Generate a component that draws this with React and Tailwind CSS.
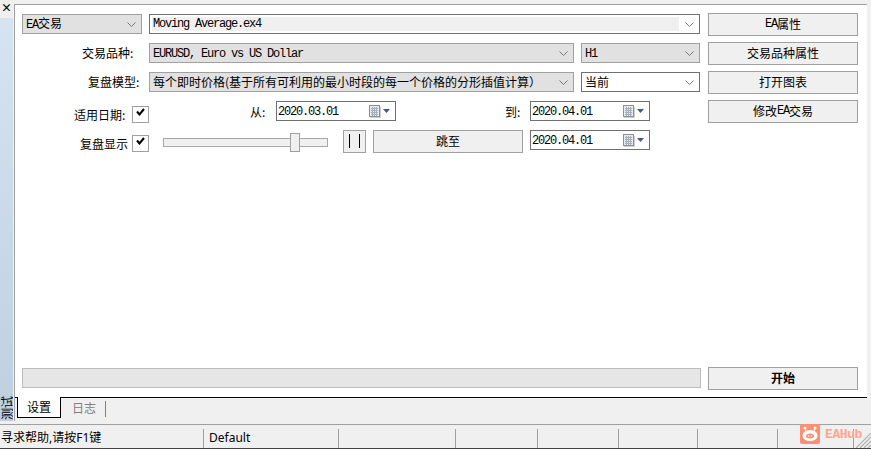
const cjk = '"Noto Sans CJK SC", sans-serif';
const latin = "font-['Liberation_Mono'] text-[12px] tracking-[-1.2px]";

function Chevron() {
  return (
    <svg width="9" height="5" viewBox="0 0 9 5" className="shrink-0">
      <path d="M0.5 0.5 L4.5 4.5 L8.5 0.5" fill="none" stroke="#777" strokeWidth="1" />
    </svg>
  );
}

function L({ children }) {
  return <span className={latin}>{children}</span>;
}

function Select({ className, children }) {
  return (
    <div className={`flex items-center h-[20px] mt-px pl-[3px] pr-[5px] text-[12px] leading-none ${className}`}>
      <div className="flex-1 min-w-0 whitespace-nowrap">{children}</div>
      <Chevron />
    </div>
  );
}

function Btn({ className = "", children }) {
  return (
    <div className={`flex items-center justify-center h-[23px] pb-px border border-[#a0a0a0] bg-[#f0f0f0] text-[12px] leading-none text-black ${className}`}>
      {children}
    </div>
  );
}

function Check() {
  return (
    <div className="w-[17px] h-[17px] mt-[6px] border border-[#a0a0a0] bg-white flex items-start justify-start shrink-0">
      <svg width="9" height="8" viewBox="0 0 9 8" className="mt-[1px] ml-[3px]">
        <path d="M1 3.5 L3.5 6.5 L8 1" fill="none" stroke="#000" strokeWidth="2" />
      </svg>
    </div>
  );
}

function DateBox({ value, className = "" }) {
  return (
    <div className={`flex items-center h-[20px] mt-px border border-[#707070] bg-white pl-[1px] pr-[5px] ${className}`}>
      <span className={`flex-1 pt-[2px] ${latin} leading-none text-black`}>{value}</span>
      <svg width="21" height="13" viewBox="0 0 21 13" className="shrink-0">
        <rect x="0.5" y="0.5" width="10" height="11" fill="#e8eaee" stroke="#8a8f98" />
        <path d="M2 3.5H9M2 5.5H9M2 7.5H9M2 9.5H9M3.5 2V11M5.5 2V11M7.5 2V11" stroke="#a9afb9" strokeWidth="1" />
        <path d="M1 12.5H12M11.5 2V12" stroke="#cfcfcf" />
        <path d="M14 4H21L17.5 8Z" fill="#3f5b86" />
      </svg>
    </div>
  );
}

export default function App() {
  return (
    <div className="w-[871px] h-[449px] flex flex-col bg-[#f0f0f0] text-black overflow-hidden" style={{ fontFamily: cjk }}>
      <div className="flex-1 min-h-0 flex">
        <div className="w-[13px] flex flex-col shrink-0 pb-[3px]">
          <div className="h-[18px] flex items-center justify-center text-[11px] font-bold leading-none pb-[4px]">×</div>
          <div className="flex-1 bg-gradient-to-b from-[#d6e4f1] to-[#bfcfdf] flex flex-col justify-end items-center overflow-hidden">
            <span className="text-[12px] leading-[13px] [writing-mode:vertical-rl] [text-orientation:sideways] rotate-180 mb-[1px]">测试</span>
          </div>
        </div>
        <div className="w-px bg-[#a0a0a0] mt-[4px] mb-[3px] shrink-0 ml-px" />
        <div className="w-[852px] shrink-0 mt-[4px] flex flex-col">
          <div className="h-[393px] flex flex-col border-t border-[#a0a0a0] bg-white pt-[8px] pl-[7px] pb-[7px]">
            <div className="flex items-start h-[23px] mb-[6px]">
              <Select className="w-[120px] border border-[#a0a0a0] bg-[#e1e1e1]">
                <L>EA</L>交易
              </Select>
              <div className="ml-[7px] mt-px w-[551px] h-[20px] border border-[#707070] bg-white flex items-center pr-[5px] p-[2px]">
                <div className={`flex-1 h-full bg-[#f0f0f0] ${latin} leading-[14px] pl-[1px] mr-[6px]`}>Moving Average.ex4</div>
                <Chevron />
              </div>
              <Btn className="ml-[8px] w-[150px]"><L>EA</L>属性</Btn>
            </div>
            <div className="flex items-start h-[23px] mb-[6px]">
              <div className="ml-[60px] w-[67px] text-[12px] leading-none mt-[5px] whitespace-nowrap">交易品种:</div>
              <Select className="w-[425px] border border-[#a0a0a0] bg-[#e1e1e1]">
                <L>EURUSD, Euro vs US Dollar</L>
              </Select>
              <Select className="ml-[7px] w-[119px] border border-[#a0a0a0] bg-[#e1e1e1]">
                <L>H1</L>
              </Select>
              <Btn className="ml-[8px] w-[150px]">交易品种属性</Btn>
            </div>
            <div className="flex items-start h-[23px] mb-[6px]">
              <div className="ml-[66px] w-[61px] text-[12px] leading-none mt-[5px] whitespace-nowrap">复盘模型:</div>
              <Select className="w-[425px] border border-[#a0a0a0] bg-[#e1e1e1]">
                每个即时价格(基于所有可利用的最小时段的每一个价格的分形插值计算）
              </Select>
              <Select className="ml-[7px] w-[119px] border border-[#707070] bg-white">当前</Select>
              <Btn className="ml-[8px] w-[150px]">打开图表</Btn>
            </div>
            <div className="flex items-start h-[23px] mb-[6px]">
              <div className="ml-[52px] w-[58px] text-[12px] leading-none mt-[9px] whitespace-nowrap">适用日期:</div>
              <Check />
              <div className="ml-[101px] w-[26px] text-[12px] leading-none mt-[6px]">从:</div>
              <DateBox value="2020.03.01" className="w-[120px]" />
              <div className="ml-[109px] w-[25px] text-[12px] leading-none mt-[6px]">到:</div>
              <DateBox value="2020.04.01" className="w-[120px]" />
              <Btn className="ml-[58px] w-[150px]">修改<L>EA</L>交易</Btn>
            </div>
            <div className="flex items-start h-[24px]">
              <div className="ml-[58px] w-[52px] text-[12px] leading-none mt-[9px] whitespace-nowrap">复盘显示</div>
              <Check />
              <div className="ml-[14px] mt-[4px] relative w-[165px] h-[19px] flex items-center">
                <div className="w-full h-[9px] border border-[#a8a8a8] bg-[#f0f0f0]" />
                <div className="absolute left-[127px] top-0 w-[10px] h-[19px] border border-[#a0a0a0] bg-[#f0f0f0]" />
              </div>
              <Btn className="ml-[15px] mt-px w-[23px]">
                <div className="flex gap-[9px] h-[14px]">
                  <div className="w-px h-full bg-black" />
                  <div className="w-px h-full bg-black" />
                </div>
              </Btn>
              <Btn className="ml-[7px] mt-px w-[150px]">跳至</Btn>
              <DateBox value="2020.04.01" className="ml-[7px] w-[120px]" />
            </div>
            <div className="mt-auto flex items-start h-[23px]">
              <div className="w-[679px] h-[20px] mt-px border border-[#bcbcbc] bg-[#e6e6e6]" />
              <Btn className="ml-[7px] w-[150px] font-bold">开始</Btn>
            </div>
          </div>
          <div className="flex-1 min-h-0 border-t border-black flex items-start pl-[2px]">
            <div className="w-[44px] h-[21px] -mt-px bg-white border-l border-r border-b border-black flex items-center justify-center text-[12px] leading-none">
              设置
            </div>
            <div className="ml-[11px] w-[24px] whitespace-nowrap text-[12px] text-[#808080] leading-none mt-[4px]">日志</div>
            <div className="ml-[9px] mt-[3px] w-px h-[16px] bg-[#808080]" />
          </div>
        </div>
      </div>
      <div className="h-[25px] border-t border-[#a0a0a0] border-b border-b-[#444] flex items-end relative text-[12px] leading-none" style={{ fontFamily: '"Noto Sans", "Noto Sans CJK SC", sans-serif' }}>
        <div className="w-[204px] h-[19px] pb-[2px] flex items-center pl-[1px] border-r border-[#a0a0a0] whitespace-nowrap">寻求帮助,请按F1键</div>
        <div className="w-[135px] h-[19px] pb-[2px] flex items-center pl-[5px] border-r border-[#a0a0a0]">Default</div>
        <div className="w-[117px] h-[19px] border-r border-[#a0a0a0]" />
        <div className="w-[82px] h-[19px] border-r border-[#a0a0a0]" />
        <div className="w-[81px] h-[19px] border-r border-[#a0a0a0]" />
        <div className="w-[79px] h-[19px] border-r border-[#a0a0a0]" />
        <div className="w-[80px] h-[19px] border-r border-[#a0a0a0]" />
        <div className="w-[76px] h-[19px] border-r border-[#a0a0a0]" />
        <div className="absolute left-[800px] -top-px flex items-center gap-[5px]">
          <svg width="20" height="20" viewBox="0 0 20 20">
            <rect width="20" height="20" rx="2" fill="#ff8f73" />
            <path d="M6 7L5 4M14 7L15 4" stroke="#fff" strokeWidth="1" />
            <circle cx="5" cy="4" r="1.5" fill="#fff" />
            <circle cx="15" cy="4" r="1.5" fill="#fff" />
            <ellipse cx="10" cy="11.5" rx="7.5" ry="5.5" fill="#fff" />
            <ellipse cx="10" cy="12" rx="4" ry="2.5" fill="#ff8f73" />
            <circle cx="8.5" cy="12" r="0.8" fill="#fff" />
            <circle cx="11.5" cy="12" r="0.8" fill="#fff" />
          </svg>
          <span className="font-['Liberation_Mono'] text-[13px] tracking-[-0.4px] font-bold text-[#ffa48e]">EAHub</span>
        </div>
        <svg width="15" height="15" viewBox="0 0 15 15" className="absolute right-0 bottom-0">
          <path d="M0 15L15 0M4 15L15 4M8 15L15 8M12 15L15 12" stroke="#b0b0b0" strokeWidth="1.2" />
        </svg>
      </div>
    </div>
  );
}
